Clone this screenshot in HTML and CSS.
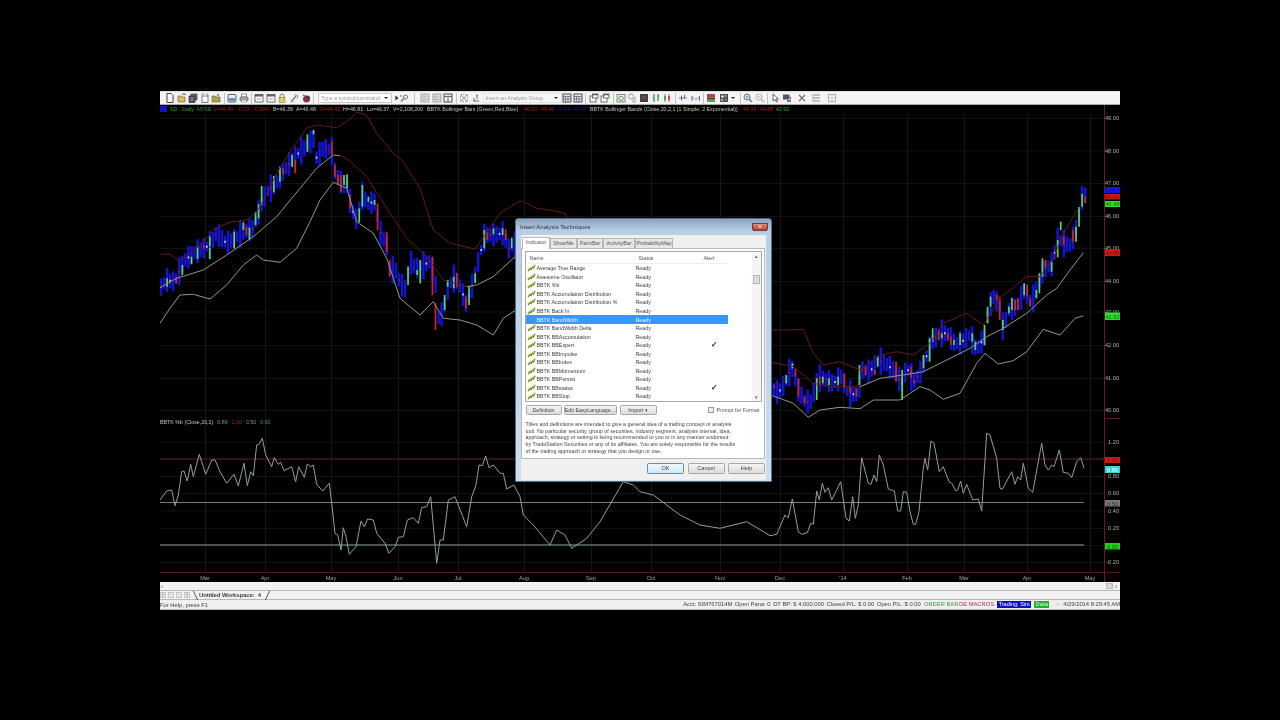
FILE: index.html
```html
<!DOCTYPE html>
<html lang="en">
<head>
<meta charset="utf-8">
<title>TradeStation - Insert Analysis Techniques</title>
<link rel="stylesheet" href="styles.css">
</head>
<body>
<svg class="defs" aria-hidden="true">
  <symbol id="i-new" viewBox="0 0 10 10"><path d="M2 .5h4l2 2v7H2z" fill="#fff" stroke="#222"/></symbol>
  <symbol id="i-open" viewBox="0 0 10 10"><path d="M1 3h3l1 1h3v5H1z" fill="#d9b44a" stroke="#5a4a20" stroke-width=".7"/><path d="M5 2l2-1.500 2 1.500" fill="none" stroke="#222"/></symbol>
  <symbol id="i-stack" viewBox="0 0 10 10"><rect x="3" y="1" width="6" height="6" fill="#555" stroke="#222" stroke-width=".7"/><rect x="1" y="3" width="6" height="6.500" fill="#333" stroke="#111" stroke-width=".7"/><path d="M2.500 5h3M2.500 7h3" stroke="#ddd" stroke-width=".6"/></symbol>
  <symbol id="i-doc" viewBox="0 0 10 10"><path d="M2 3h6v6.500H2z" fill="#fff" stroke="#444" stroke-width=".8"/><path d="M1 2l3-1.500M6 .5l3 2" stroke="#444" stroke-width=".8"/></symbol>
  <symbol id="i-folder" viewBox="0 0 10 10"><path d="M1 3h3l1 1h4v5H1z" fill="#a88f35" stroke="#4c5a20" stroke-width=".7"/><path d="M6 3l2-2" stroke="#2f8f3f" stroke-width="1.200"/></symbol>
  <symbol id="i-save" viewBox="0 0 10 10"><rect x="1" y="1.500" width="8" height="7.500" rx="1" fill="#e8eef6" stroke="#33475f"/><rect x="2" y="5" width="6" height="3" fill="#5c7da6"/></symbol>
  <symbol id="i-print" viewBox="0 0 10 10"><rect x="2.500" y="1" width="5" height="3" fill="#fff" stroke="#555" stroke-width=".7"/><rect x="1" y="4" width="8" height="4" rx="1" fill="#9a9a9a" stroke="#444" stroke-width=".7"/><rect x="2.500" y="7" width="5" height="2" fill="#fff" stroke="#555" stroke-width=".5"/></symbol>
  <symbol id="i-win" viewBox="0 0 10 10"><rect x="1" y="1.500" width="8" height="7.500" fill="#fff" stroke="#333" stroke-width=".8"/><rect x="1" y="1.500" width="8" height="2" fill="#444"/><path d="M2.500 6h5" stroke="#777" stroke-width=".7"/></symbol>
  <symbol id="i-lock" viewBox="0 0 10 10"><path d="M3 5V3a2 2 0 0 1 4 0v2" fill="none" stroke="#7a6a20"/><rect x="2" y="4.500" width="6" height="5" fill="#e3c24a" stroke="#7a6a20" stroke-width=".6"/></symbol>
  <symbol id="i-tools" viewBox="0 0 10 10"><path d="M2 9l5-6" stroke="#666" stroke-width="1.300"/><path d="M5 1.500l4 1-1 3" fill="none" stroke="#888"/><path d="M2 6l3 3" stroke="#b8a24a"/></symbol>
  <symbol id="i-pie" viewBox="0 0 10 10"><circle cx="5.500" cy="6" r="3.500" fill="#7a1020"/><path d="M5.500 6V2.500A3.500 3.500 0 0 1 9 6z" fill="#222"/><path d="M2 1.500l2 2" stroke="#2e8a3a" stroke-width="1.200"/></symbol>
  <symbol id="i-arrow" viewBox="0 0 10 10"><path d="M3 2l4 3-4 3z" fill="#111"/></symbol>
  <symbol id="i-search" viewBox="0 0 10 10"><circle cx="6.500" cy="4" r="2" fill="none" stroke="#556"/><path d="M5 5.500L2 8.500" stroke="#556" stroke-width="1.200"/><path d="M1 3h2M2 2v2" stroke="#889"/></symbol>
  <symbol id="i-grid" viewBox="0 0 10 10"><rect x="1" y="1" width="8" height="8" fill="#ddd" stroke="#888" stroke-width=".8"/><path d="M1 4h8M1 6.500h8M4 1v8" stroke="#999" stroke-width=".6"/></symbol>
  <symbol id="i-griddark" viewBox="0 0 10 10"><rect x="1" y="1" width="8" height="8" fill="#eee" stroke="#333"/><path d="M1 3.500h8M5 3.500V9" stroke="#333" stroke-width=".8"/></symbol>
  <symbol id="i-gear" viewBox="0 0 10 10"><rect x="1.500" y="1.500" width="7" height="7" fill="none" stroke="#889" stroke-dasharray="1.500 1"/><path d="M2 8l6-6M2 2l6 6" stroke="#667" stroke-width=".8"/></symbol>
  <symbol id="i-up" viewBox="0 0 10 10"><path d="M2 8h6M3 8V5M6 6V2" stroke="#555"/><path d="M5 2.500l1-1.500 1 1.500" fill="#555"/></symbol>
  <symbol id="i-gridb" viewBox="0 0 10 10"><rect x="1" y="1" width="8" height="8" fill="#dfe6ee" stroke="#334"/><path d="M1 3.500h8M3.500 3.500V9M6 3.500V9M1 6h8" stroke="#445" stroke-width=".7"/></symbol>
  <symbol id="i-winb" viewBox="0 0 10 10"><rect x="1" y="3" width="6" height="6" fill="#fff" stroke="#333" stroke-width=".8"/><rect x="3.500" y="1" width="5.500" height="4" fill="#fff" stroke="#333" stroke-width=".8"/><rect x="3.500" y="1" width="5.500" height="1.300" fill="#444"/></symbol>
  <symbol id="i-clock" viewBox="0 0 10 10"><rect x="1" y="1.500" width="8" height="7.500" fill="#e6efe0" stroke="#3f6a3f" stroke-width=".8"/><circle cx="5" cy="5.500" r="2.200" fill="none" stroke="#3f6a3f" stroke-width=".8"/></symbol>
  <symbol id="i-head" viewBox="0 0 10 10"><circle cx="4" cy="3.500" r="2.500" fill="none" stroke="#888"/><path d="M6 6.500v3M8 4v5.500" stroke="#888"/></symbol>
  <symbol id="i-dark" viewBox="0 0 10 10"><rect x="1" y="1" width="8" height="8" fill="#222"/><path d="M3 7l2-4 2 3" fill="none" stroke="#b33" stroke-width=".8"/></symbol>
  <symbol id="i-gbars" viewBox="0 0 10 10"><path d="M3 1v8M7 1v7" stroke="#1f8f2f" stroke-width="1.400"/><path d="M1.500 5h1.500M7 3h1.500" stroke="#1f8f2f"/></symbol>
  <symbol id="i-cand" viewBox="0 0 10 10"><path d="M3 1v8" stroke="#2d8f3d"/><rect x="2" y="3" width="2" height="4" fill="#2d8f3d"/><path d="M7 1v8" stroke="#c43030"/><rect x="6" y="3" width="2" height="4" fill="#c43030"/></symbol>
  <symbol id="i-spread" viewBox="0 0 10 10"><path d="M1 5h8M3.500 2.500v5M6.500 1.500v4" stroke="#44608c"/></symbol>
  <symbol id="i-spreadb" viewBox="0 0 10 10"><path d="M1 8V3M1 5h2M8.500 8V3M6.500 5h2M4 6h2" stroke="#44608c"/></symbol>
  <symbol id="i-flag" viewBox="0 0 10 10"><rect x="1" y="1" width="8" height="3.500" fill="#b82020"/><rect x="1" y="4.500" width="8" height="1.500" fill="#222"/><rect x="1" y="6" width="8" height="3" fill="#2d9a3d"/></symbol>
  <symbol id="i-mosaic" viewBox="0 0 10 10"><rect x="1" y="1" width="8" height="8" fill="#333"/><circle cx="3.500" cy="3.500" r="1.200" fill="#fff"/><circle cx="6.500" cy="6.500" r="1.200" fill="#d33"/><circle cx="6.500" cy="3" r="1" fill="#4c4"/><circle cx="3" cy="7" r="1" fill="#ccc"/></symbol>
  <symbol id="i-zoomin" viewBox="0 0 10 10"><circle cx="4" cy="4" r="3" fill="#eef" stroke="#556"/><path d="M6 6l3 3" stroke="#556" stroke-width="1.300"/><path d="M2.500 4h3M4 2.500v3" stroke="#38a"/></symbol>
  <symbol id="i-zoomout" viewBox="0 0 10 10"><circle cx="4" cy="4" r="3" fill="#f4f4f4" stroke="#aaa"/><path d="M6 6l3 3" stroke="#aaa" stroke-width="1.300"/><path d="M2.500 4h3" stroke="#aaa"/></symbol>
  <symbol id="i-cursor" viewBox="0 0 10 10"><path d="M3 1v7l2-1.500L6.500 9 7.500 8.500 6 6h2.500z" fill="#fff" stroke="#222" stroke-width=".8"/></symbol>
  <symbol id="i-wdark" viewBox="0 0 10 10"><rect x="1" y="1.500" width="6.500" height="5" fill="#2b3f66"/><path d="M5 7h4v2H5z" fill="#666"/><path d="M7 4h2v3" fill="#a33"/></symbol>
  <symbol id="i-wrench" viewBox="0 0 10 10"><path d="M2 2l6 6M8 2L2 8" stroke="#555" stroke-width="1.200"/></symbol>
  <symbol id="i-list" viewBox="0 0 10 10"><path d="M2 2h6M2 5h6M2 8h6" stroke="#777"/><path d="M1 1v8" stroke="#b09a4a"/></symbol>
  <symbol id="i-faint" viewBox="0 0 10 10"><rect x="1.500" y="1.500" width="7" height="7" fill="none" stroke="#aaa"/><path d="M1.500 5h7M5 1.500v7" stroke="#bbb" stroke-width=".7"/></symbol>
  <symbol id="i-ind" viewBox="0 0 10 10"><path d="M.5 9L3 6l1.500 1L6 4l1.500 1.200L9.500 1" fill="none" stroke="#6e8a14" stroke-width="1.500"/><path d="M.5 7L3 4.500 5 5 8 1.500" fill="none" stroke="#c2a020" stroke-width=".8"/></symbol>
</svg>

<div class="app">
  <div class="toolbar">
    <div class="grp"><svg class="i"><use href="#i-new"/></svg><svg class="i"><use href="#i-open"/></svg><svg class="i"><use href="#i-stack"/></svg><svg class="i"><use href="#i-doc"/></svg><svg class="i"><use href="#i-folder"/></svg></div>
    <span class="sep"></span>
    <div class="grp"><svg class="i"><use href="#i-save"/></svg><svg class="i"><use href="#i-print"/></svg></div>
    <span class="sep"></span>
    <div class="grp"><svg class="i"><use href="#i-win"/></svg><svg class="i"><use href="#i-win"/></svg><svg class="i"><use href="#i-lock"/></svg><svg class="i"><use href="#i-tools"/></svg><svg class="i"><use href="#i-pie"/></svg></div>
    <span class="sep"></span>
    <div class="combo combo-symbol"><span>Type a symbol/command</span><b class="caret"></b></div>
    <svg class="i i-narrow"><use href="#i-arrow"/></svg>
    <svg class="i i-search"><use href="#i-search"/></svg>
    <span class="sep sep-wide"></span>
    <div class="grp"><svg class="i"><use href="#i-grid"/></svg><svg class="i"><use href="#i-grid"/></svg><svg class="i"><use href="#i-griddark"/></svg></div>
    <span class="sep"></span>
    <div class="grp"><svg class="i"><use href="#i-gear"/></svg><svg class="i"><use href="#i-up"/></svg></div>
    <div class="combo combo-group"><span>Insert an Analysis Group</span><b class="caret"></b></div>
    <div class="grp"><svg class="i"><use href="#i-gridb"/></svg><svg class="i"><use href="#i-gridb"/></svg></div>
    <span class="sep"></span>
    <div class="grp"><svg class="i"><use href="#i-winb"/></svg><svg class="i"><use href="#i-winb"/></svg></div>
    <span class="sep"></span>
    <div class="grp"><svg class="i"><use href="#i-clock"/></svg><svg class="i"><use href="#i-head"/></svg><svg class="i"><use href="#i-dark"/></svg><svg class="i"><use href="#i-gbars"/></svg><svg class="i"><use href="#i-cand"/></svg></div>
    <span class="sep"></span>
    <div class="grp grp-wide"><svg class="i"><use href="#i-spread"/></svg><svg class="i"><use href="#i-spreadb"/></svg></div>
    <span class="sep"></span>
    <div class="grp grp-wide"><svg class="i"><use href="#i-flag"/></svg><svg class="i"><use href="#i-mosaic"/></svg></div><b class="caret caret-tb"></b>
    <span class="sep"></span>
    <div class="grp"><svg class="i"><use href="#i-zoomin"/></svg><svg class="i"><use href="#i-zoomout"/></svg></div>
    <span class="sep"></span>
    <div class="grp"><svg class="i"><use href="#i-cursor"/></svg><svg class="i"><use href="#i-wdark"/></svg></div>
    <svg class="i i-gap"><use href="#i-wrench"/></svg>
    <svg class="i i-gap"><use href="#i-list"/></svg>
    <svg class="i i-gap"><use href="#i-faint"/></svg>
  </div>

  <div class="chart">
    <svg id="plot" class="plot" viewBox="160 105 960 477" preserveAspectRatio="none"></svg>
    <div class="legend">
      <i class="swatch"></i>
      <span class="g sym">SD - Daily</span><span class="g nyse">NYSE</span>
      <span class="r l1">L=46.46</span><span class="r l2">-0.23</span><span class="r l3">-0.50%</span>
      <span class="w b1">B=46.39</span><span class="w a1">A=46.48</span><span class="r o1">O=46.62</span>
      <span class="w h1">H=46.81</span><span class="w lo">Lo=46.37</span><span class="w v1">V=2,108,200</span>
      <span class="w t1">BBTK Bollinger Bars (Green,Red,Blue)</span>
      <span class="r n1">46.62</span><span class="r n2">46.46</span><span class="bl n3">46.81</span><span class="bl n4">46.37</span>
      <span class="w t2">BBTK Bollinger Bands (Close,20,2,1 (1 Simple, 2 Exponential))</span>
      <span class="r n5">46.03</span><span class="r n6">44.88</span><span class="g n7">42.92</span>
    </div>
    <div class="legend2">
      <span class="w">BBTK %b (Close,20,2)</span><span class="c">0.89</span><span class="r">1.00</span><span class="gy">0.50</span><span class="g">0.00</span>
    </div>
  </div>

  <div class="hscroll">
    <span class="hs-left">‹</span>
    <span class="hs-thumb"></span>
    <span class="hs-right">›</span>
  </div>

  <div class="tabs">
    <span class="nav">|‹</span><span class="nav">‹</span><span class="nav">›</span><span class="nav">›|</span>
    <div class="wtab">Untitled Workspace:&nbsp; 4</div>
  </div>

  <div class="status">
    <span class="help">For Help, press F1</span>
    <span class="st">Acct: SIM767014M</span>
    <span class="st">Open Pana: 0</span>
    <span class="st">DT BP: $ 4,000,000</span>
    <span class="st">Closed P/L: $ 0.00</span>
    <span class="st">Open P/L: $ 0.00</span>
    <span class="st st-green">ORDER BAR</span>
    <span class="st st-red">OE MACROS</span>
    <span class="st st-trading">Trading: Sim</span>
    <span class="st st-data">Data</span>
    <span class="st st-bell">♪</span>
    <span class="st st-date">4/29/2014 8:29:45 AM</span>
  </div>
</div>

<div class="dialog">
  <div class="titlebar">
    <span>Insert Analysis Techniques</span>
    <span class="close">×</span>
  </div>
  <div class="client">
    <div class="dtabs">
      <span class="dtab active">Indicator</span>
      <span class="dtab t2">ShowMe</span>
      <span class="dtab t3">PaintBar</span>
      <span class="dtab t4">ActivityBar</span>
      <span class="dtab t5">ProbabilityMap</span>
    </div>
    <div class="panel">
      <div class="listbox">
        <div class="listmain">
          <div class="lhead"><span class="c-name">Name</span><span class="c-status">Status</span><span class="c-alert">Alert</span></div>
          <div class="lrows" id="rows"></div>
        </div>
        <div class="vscroll"><span class="up">▴</span><span class="thumb"></span><span class="dn">▾</span></div>
      </div>
      <div class="actions">
        <span class="btn b-def">Definition</span>
        <span class="btn b-edit">Edit EasyLanguage...</span>
        <span class="btn b-imp">Import ▾</span>
        <span class="check"><i></i>Prompt for Format</span>
      </div>
      <p class="disclaimer">Titles and definitions are intended to give a general idea of a trading concept or analysis<br>tool. No particular security, group of securities, industry segment, analysis interval, idea,<br>approach, strategy or setting is being recommended to you or in any manner endorsed<br>by TradeStation Securities or any of its affiliates. You are solely responsible for the results<br>of the trading approach or strategy that you design or use.</p>
    </div>
    <div class="footer">
      <span class="btn fbtn default">OK</span>
      <span class="btn fbtn">Cancel</span>
      <span class="btn fbtn">Help</span>
    </div>
  </div>
</div>
<script src="chart.js"></script>
</body>
</html>
```
FILE: styles.css
```css
* { box-sizing: border-box; }
html, body { margin: 0; height: 100%; background: #000; overflow: hidden; }
body { font-family: "Liberation Sans", Arial, sans-serif; position: relative; }
.defs { position: absolute; width: 0; height: 0; }

.app { position: absolute; left: 160px; top: 91px; width: 960px; height: 519px; display: flex; flex-direction: column; background: #f0f0f0; filter: blur(.4px); }

/* toolbar */
.toolbar { height: 14px; flex: none; display: flex; align-items: center; padding-left: 5px; background: #f4f4f4; border-top: 1px solid #ddd; border-bottom: 1px solid #aaa; }
.grp { display: flex; gap: 1.6px; }
.grp-wide { gap: 3px; }
.i { width: 10px; height: 10px; flex: none; opacity: .85; }
.i-narrow { width: 8px; margin-left: 1px; }
.i-search { margin-left: -2px; }
.i-gap { margin-left: 5px; }
.sep { width: 1px; height: 11px; background: #c4c4c4; margin: 0 2.3px; flex: none; }
.sep-wide { margin: 0 5px; }
.combo { height: 10px; background: #fff; border: 1px solid #c8c8c8; font-size: 5.3px; line-height: 8px; color: #9a9a9a; padding-left: 2px; display: flex; justify-content: space-between; align-items: center; flex: none; }
.combo-symbol { width: 74px; margin-left: 2px; }
.combo-group { width: 79px; margin-left: 2px; border-color: #e4e4e4; background: #f7f7f7; }
.caret { width: 0; height: 0; border: 2px solid transparent; border-top: 2.5px solid #222; border-bottom: 0; margin-right: 3px; flex: none; }
.caret-tb { margin-left: 2px; margin-right: 2px; }

/* chart */
.chart { position: relative; height: 477px; flex: none; background: #000; overflow: hidden; }
.plot { display: block; width: 960px; height: 477px; }
.plot text { font-family: "Liberation Sans", Arial, sans-serif; font-size: 5.6px; }
.legend, .legend2 { position: absolute; left: 0; font-size: 5.3px; line-height: 7px; white-space: nowrap; }
.legend { top: 0; height: 8px; width: 960px; }
.legend span { position: absolute; top: .5px; }
.legend .swatch { position: absolute; left: 0; top: 1px; width: 7px; height: 6px; background: #1212d0; }
.g { color: #3c9a48; } .r { color: #a02020; } .w { color: #c4c4c4; } .bl { color: #1a1a8e; } .c { color: #4fa5a0; } .gy { color: #8a8a8a; }
.sym { left: 10px; } .nyse { left: 37px; } .l1 { left: 54px; } .l2 { left: 77px; } .l3 { left: 93px; }
.b1 { left: 113px; } .a1 { left: 136px; } .o1 { left: 160px; } .h1 { left: 183px; } .lo { left: 207px; } .v1 { left: 233px; } .t1 { left: 267px; }
.n1 { left: 364px; } .n2 { left: 381px; } .n3 { left: 397px; } .n4 { left: 413px; } .t2 { left: 430px; }
.n5 { left: 583px; } .n6 { left: 600px; } .n7 { left: 616px; }
.legend2 { top: 313.5px; display: flex; gap: 4px; }

/* bottom bars */
.hscroll { height: 9px; flex: none; background: #f2f2f2; border-bottom: 1px solid #b8b8b8; display: flex; align-items: center; font-size: 6px; color: #444; padding: 0 3px 0 1px; }
.hs-thumb { margin-left: auto; width: 7px; height: 6px; background: #d8d8d8; border: 1px solid #bbb; }
.hs-right { margin-left: 2px; }
.tabs { height: 9px; flex: none; background: #f2f2f2; border-bottom: 1px solid #b8b8b8; display: flex; align-items: center; font-size: 5px; color: #555; }
.nav { width: 6px; height: 6px; margin-right: 2px; background: #eee; border: 1px solid #c4c4c4; line-height: 4px; text-align: center; font-size: 4px; flex: none; }
.wtab { position: relative; margin-left: 2px; height: 9px; padding: 0 0 0 5px; width: 75px; font-size: 6px; line-height: 8px; font-weight: 700; color: #444; white-space: nowrap; letter-spacing: -.02em; }
.wtab::before, .wtab::after { content: ""; position: absolute; top: 0; bottom: 0; width: 1px; background: #555; }
.wtab::before { left: 1px; transform: skewX(25deg); }
.wtab::after { right: 1px; transform: skewX(-25deg); }
.status { flex: 1; min-height: 0; background: #efefef; border-bottom: 1px solid #bdbdbd; display: flex; align-items: center; font-size: 5.8px; color: #444; white-space: nowrap; }
.help { font-size: 5.8px; margin-right: auto; }
.st { margin-left: 2.6px; line-height: 7px; flex: none; }
.st-green { color: #3f9a4a; margin-left: 3.2px; } .st-red { color: #c03040; margin-left: .3px; }
.st-trading { background: #1010c0; color: #fff; padding: 0 1.5px; margin-left: 3px; font-size: 5.5px; }
.st-data { background: #22b02a; color: #eef; padding: 0 1.5px; margin-left: 3px; }
.st-bell { color: #d8b030; margin-left: 7px; }
.st-date { margin-left: 4px; }

/* dialog */
.dialog { position: absolute; left: 515px; top: 218px; width: 257px; height: 264px; background: linear-gradient(#8aa3bf 0, #b7cfe6 12px, #c9dff2 100%); border: 1px solid #59708a; border-radius: 3px 3px 0 0; display: flex; flex-direction: column; filter: blur(.4px); color: #3b3b3b; font-size: 5.3px; }
.titlebar { height: 16px; flex: none; display: flex; align-items: center; justify-content: space-between; padding: 0 3px 0 4px; font-size: 6px; color: #2d3440; }
.close { width: 16px; height: 8px; background: linear-gradient(#d98878, #b8402e); border: 1px solid #6e3a38; color: #fff; text-align: center; font-size: 7px; line-height: 6px; border-radius: 0 0 2px 2px; }
.client { margin: 0 5px 1px; flex: 1; min-height: 0; background: #f0f0f0; padding: 2px 0 0; display: flex; flex-direction: column; }
.dtabs { display: flex; height: 11px; padding-left: 1px; flex: none; position: relative; }
.dtab { height: 10px; margin-top: 1px; background: #e6e6e6; border: 1px solid #b8b8b8; border-bottom: 0; text-align: center; line-height: 8px; font-size: 5.3px; color: #555; flex: none; }
.dtab.active { width: 28px; height: 12px; margin-top: 0; background: #fff; line-height: 9px; position: relative; z-index: 1; }
.t2 { width: 27px; } .t3 { width: 26px; } .t4 { width: 32px; } .t5 { width: 38px; }
.panel { height: 211px; flex: none; background: #fff; border: 1px solid #b8b8b8; margin-right: 1px; padding: 2px 2.5px 0; display: flex; flex-direction: column; }
.listbox { height: 151px; flex: none; border: 1px solid #a9a9a9; display: flex; overflow: hidden; background: #fff; }
.listmain { flex: 1; min-width: 0; }
.lhead { height: 12px; display: flex; align-items: center; position: relative; color: #555; border-bottom: 1px solid #eee; }
.c-name { position: absolute; left: 4px; } .c-status { position: absolute; left: 113px; } .c-alert { position: absolute; left: 178px; }
.lrows { display: flex; flex-direction: column; }
.row { height: 8.55px; flex: none; display: flex; align-items: center; position: relative; width: 202px; line-height: 8px; }
.row .ic { width: 9px; height: 8px; margin-left: 1.5px; margin-right: .5px; flex: none; }
.row .nm { width: 99px; white-space: nowrap; }
.row .sts { width: 60px; }
.row .ck { position: absolute; left: 185px; color: #111; font-size: 7.5px; font-weight: 700; }
.row.sel { background: #3399ff; color: #eaf4ff; }
.row.sel .ic { opacity: .35; }
.vscroll { width: 9px; flex: none; background: #f4f4f4; margin-left: 25px; position: relative; font-size: 5px; color: #555; text-align: center; }
.vscroll span { position: absolute; left: 0; width: 100%; }
.vscroll .up { top: 1px; } .vscroll .dn { bottom: 1px; }
.vscroll .thumb { top: 23px; height: 9px; background: #dcdcdc; border: 1px solid #b5b5b5; left: 1px; width: 7px; }
.actions { height: 11px; margin-top: 2.5px; flex: none; display: flex; align-items: center; position: relative; }
.btn { height: 10.5px; background: linear-gradient(#f4f4f4, #dcdcdc); border: 1px solid #a8a8a8; border-radius: 1.5px; text-align: center; line-height: 8px; color: #444; font-size: 5.3px; flex: none; }
.b-def { width: 36px; margin-left: 1px; } .b-edit { width: 53px; margin-left: 2px; } .b-imp { width: 37px; margin-left: 3px; }
.check { position: absolute; left: 183px; display: flex; align-items: center; color: #555; gap: 3px; white-space: nowrap; }
.check i { width: 6px; height: 6px; border: 1px solid #999; background: #eee; }
.disclaimer { margin: 5.5px 0 0 1px; font-size: 5.3px; line-height: 6.7px; color: #444; white-space: nowrap; }
.footer { flex: 1; display: flex; justify-content: flex-end; align-items: flex-start; gap: 3.5px; padding: 4px 1px 0 0; }
.fbtn { width: 37px; height: 11px; font-size: 5.6px; }
.fbtn.default { border-color: #4d92c9; background: linear-gradient(#f2f8fc, #cfe6f6); }
```
FILE: chart.js
```js
(function () {
  var NS = 'http://www.w3.org/2000/svg';
  var svg = document.getElementById('plot');
  function el(name, attrs, text) {
    var e = document.createElementNS(NS, name);
    for (var k in attrs) e.setAttribute(k, attrs[k]);
    if (text) e.textContent = text;
    svg.appendChild(e);
    return e;
  }
  function line(x1, y1, x2, y2, c, w) { el('line', { x1: x1, y1: y1, x2: x2, y2: y2, stroke: c, 'stroke-width': w || 1 }); }
  function poly(p, ox, oy, c, w) {
    var s = p.map(function (q) { return (ox + q[0] / 3).toFixed(1) + ',' + (oy + q[1] / 3).toFixed(1); }).join(' ');
    el('polyline', { points: s, fill: 'none', stroke: c, 'stroke-width': w || 1, 'stroke-linejoin': 'round' });
  }

  /* grid */
  var months = [['Mar', 205], ['Apr', 265], ['May', 331], ['Jun', 398], ['Jul', 458], ['Aug', 524], ['Sep', 591], ['Oct', 651], ['Nov', 720], ['Dec', 780], ["'14", 843], ['Feb', 907], ['Mar', 964], ['Apr', 1027], ['May', 1090]];
  var prices = [['49.00', 118], ['48.00', 150.5], ['47.00', 183], ['46.00', 216], ['45.00', 248], ['44.00', 281], ['43.00', 311.5], ['42.00', 345], ['41.00', 378], ['40.00', 410]];
  var pcts = [['1.20', 441.5], ['1.00', 459], ['0.80', 476], ['0.60', 493], ['0.40', 510.5], ['0.20', 528], ['0.00', 545], ['-0.20', 562]];
  months.forEach(function (m) { line(m[1] + .5, 114, m[1] + .5, 572, '#181818'); });
  prices.concat(pcts).forEach(function (p) { line(160, p[1] + .5, 1104, p[1] + .5, '#111'); });

  /* upper panel bars */
  var L = { ox: 160, oy: 105, from: 3, to: 1065,
    trace: [[0,550],[20,525],[45,530],[70,470],[100,445],[130,430],[150,420],[170,385],[200,415],[225,400],[250,380],[280,370],[300,310],[320,260],[345,240],[370,200],[400,160],[420,140],[440,125],[460,100],[470,160],[490,130],[515,135],[525,200],[545,235],[560,240],[575,310],[590,345],[605,270],[625,295],[650,290],[655,370],[680,420],[690,500],[705,490],[720,535],[735,550],[750,470],[770,490],[790,480],[810,470],[825,520],[835,640],[850,620],[865,545],[880,520],[895,530],[920,600],[940,530],[960,450],[975,390],[1000,390],[1030,385],[1045,430],[1062,420]],
    green: [[17,520,545],[63,480,510],[90,455,478],[117,425,462],[145,428,462],[153,395,425],[225,380,430],[252,352,375],[272,368,403],[290,320,360],[298,298,340],[307,243,300],[343,213,262],[361,187,230],[397,150,185],[442,88,140],[460,75,88],[550,210,240],[558,208,250],[596,310,352],[605,240,305],[623,275,290],[640,285,300],[740,485,540],[775,495,510],[785,465,535],[858,570,615],[867,525,545],[885,515,550],[930,542,600],[948,505,535],[975,375,430],[1003,370,388],[1030,370,390],[1057,398,430]],
    red: [[45,515,535],[127,420,432],[262,365,390],[370,190,207],[407,165,205],[515,110,150],[523,180,215],[533,210,240],[543,210,260],[571,270,310],[651,295,375],[677,380,440],[687,465,515],[820,455,570],[830,595,675],[893,505,545],[920,575,610],[985,380,405],[1038,372,405]]
  };
  var R = { ox: 770, oy: 170, from: 3, to: 946,
    trace: [[10,655],[25,670],[45,640],[65,590],[85,660],[105,695],[125,695],[140,625],[160,625],[190,640],[215,620],[235,670],[265,675],[275,600],[300,605],[325,570],[345,580],[370,600],[385,620],[395,650],[410,590],[430,635],[450,610],[465,570],[490,510],[510,490],[530,490],[555,520],[570,520],[600,495],[620,540],[645,500],[655,420],[670,380],[690,410],[700,480],[715,420],[740,410],[765,360],[785,400],[805,340],[820,300],[850,280],[860,200],[880,220],[900,225],[915,190],[925,140],[935,85],[942,75]],
    green: [[47,615,640],[67,580,595],[137,625,690],[157,620,640],[175,625,645],[200,620,645],[272,585,645],[327,560,590],[392,625,690],[400,600,645],[465,555,595],[482,505,575],[490,475,515],[517,490,505],[555,510,525],[572,490,525],[605,490,515],[617,515,540],[645,465,525],[653,410,460],[662,380,410],[697,450,480],[716,410,430],[725,385,420],[762,340,375],[798,360,385],[807,310,370],[815,265,320],[843,275,305],[860,210,262],[870,155,180],[915,170,215],[924,112,170],[933,72,110]],
    red: [[12,645,655],[75,595,620],[85,625,680],[102,680,700],[147,620,645],[220,610,655],[245,650,670],[255,655,680],[290,590,615],[310,600,615],[380,575,635],[420,590,625],[435,630,640],[508,480,510],[535,490,510],[545,500,525],[680,375,390],[690,380,450],[735,390,420],[745,385,420],[770,345,380],[785,385,410],[825,270,295],[878,200,225],[905,180,215],[943,80,100]]
  };
  function at(t, x) {
    for (var i = 1; i < t.length; i++) if (x <= t[i][0]) {
      var a = t[i - 1], b = t[i];
      return a[1] + (b[1] - a[1]) * (x - a[0]) / (b[0] - a[0]);
    }
    return t[t.length - 1][1];
  }
  function drawBars(S) {
    var half = [26, 18, 36, 22, 30, 16, 42, 24, 20, 34];
    var step = 9.15, n = 0;
    for (var x = S.from; x <= S.to; x += step, n++) {
      var y = at(S.trace, x), h = half[n % half.length];
      var px = S.ox + x / 3;
      line(px, S.oy + (y - h) / 3, px, S.oy + (y + h) / 3, '#1414d0', 2.5);
      var hit = false;
      [['green', '#5cd65c'], ['red', '#d22424']].forEach(function (k) {
        S[k[0]].forEach(function (b) {
          if (Math.abs(b[0] - x) <= step / 2) {
            line(px, S.oy + b[1] / 3, px, S.oy + b[2] / 3, k[1], 1.7);
            hit = true;
          }
        });
      });
      if (!hit && n % 3 === 0) line(px, S.oy + (y - 3) / 3, px, S.oy + (y + 3) / 3, n % 2 ? '#d8e8d8' : '#8b2b2b', 1.5);
    }
  }
  drawBars(L);
  drawBars(R);

  /* Bollinger bands */
  var RED = '#661a1a', PALE = '#8f9a88';
  poly([[0,447],[30,448],[60,470],[100,440],[130,410],[165,370],[210,352],[260,345],[290,320],[320,270],[350,205],[390,140],[440,70],[470,60],[530,68],[560,50],[590,22],[620,30],[650,85],[700,145],[730,170],[780,250],[820,375],[870,415],[945,432],[975,390],[1020,325],[1075,290],[1085,288],[1130,310],[1170,315],[1215,325],[1300,500],[1500,700]], 160, 105, RED);
  poly([[-20,480],[10,480],[50,480],[100,478],[130,550],[160,585],[210,575],[270,600],[330,555],[380,545],[430,555],[480,520],[520,460],[590,430],[640,465],[690,385],[770,320],[810,320],[850,265],[880,190],[925,115]], 770, 170, RED);
  poly([[0,548],[50,520],[130,495],[200,450],[280,395],[350,335],[420,250],[470,190],[520,150],[540,152]], 160, 105, PALE);
  poly([[540,152],[560,160],[620,215],[680,310],[740,400],[800,455],[850,525],[920,545]], 160, 105, RED);
  poly([[920,545],[950,540],[1000,515],[1060,460],[1090,445]], 160, 105, PALE);
  poly([[-20,570],[10,578],[70,590],[130,640],[180,650],[270,650]], 770, 170, RED);
  poly([[270,650],[330,625],[400,615],[460,605],[530,570],[600,535],[650,500],[700,475],[770,430],[830,375],[860,355],[900,300],[940,248]], 770, 170, PALE);
  poly([[0,655],[30,610],[60,570],[100,568],[150,582],[200,540],[250,480],[290,450],[310,465],[360,472],[410,430],[450,350],[480,285],[520,232],[560,250],[590,350],[640,385],[680,460],[720,580],[780,630],[820,590],[850,640],[900,645],[950,660],[1000,690],[1030,640],[1075,610],[1090,600]], 160, 105, PALE);
  poly([[-20,670],[10,678],[70,700],[115,742],[150,720],[210,712],[270,716],[310,690],[390,690],[450,650],[480,660],[520,688],[570,670],[620,580],[645,550],[685,582],[730,572],[770,545],[820,478],[870,495],[915,445],[940,437]], 770, 170, PALE);

  /* lower panel */
  line(160, 459, 1105, 459, '#5c1a1a', 1);
  line(160, 502.5, 1084, 502.5, '#7c7e76', 1);
  line(160, 545, 1084, 545, '#5f7063', 1.3);
  var PCT = '#8fa19b';
  poly([[0,255],[20,228],[35,225],[45,272],[55,240],[65,170],[72,168],[82,198],[92,148],[100,185],[118,118],[137,178],[155,135],[165,135],[180,170],[200,205],[222,178],[235,212],[252,145],[262,212],[272,170],[280,182],[290,90],[297,88],[307,70],[317,120],[335,155],[343,128],[355,148],[362,142],[372,167],[395,155],[407,200],[416,155],[433,187],[442,147],[452,155],[460,150],[470,208],[488,228],[508,205],[515,265],[525,355],[533,360],[543,405],[550,338],[558,365],[568,418],[588,395],[603,318],[613,335],[623,312],[640,315],[650,355],[675,385],[687,415],[705,395],[715,367],[730,365],[742,315],[760,308],[775,325],[785,278],[800,275],[812,245],[830,445],[840,375],[850,375],[865,255],[885,245],[920,335],[935,245],[948,210],[957,150],[967,152],[977,123],[987,158],[1000,150],[1020,175],[1030,175],[1040,222],[1062,210],[1080,245],[1090,300],[1120,330],[1170,390],[1190,345],[1215,360],[1235,400],[1280,370],[1320,320],[1390,200],[1420,210],[1440,230],[1480,240],[1560,300],[1620,330],[1680,340],[1760,320],[1830,362]], 160, 415, PCT);
  poly([[0,362],[20,358],[45,300],[55,308],[67,252],[85,350],[95,358],[112,353],[122,325],[130,328],[140,228],[148,255],[157,205],[165,232],[175,218],[185,255],[212,200],[228,310],[238,318],[248,245],[256,310],[265,270],[275,128],[295,205],[303,208],[312,180],[320,200],[328,120],[340,150],[355,222],[373,228],[383,288],[392,288],[400,230],[410,232],[420,290],[430,328],[437,328],[447,290],[460,160],[465,130],[473,165],[483,78],[492,85],[508,170],[520,155],[537,200],[545,205],[558,228],[563,225],[572,198],[580,235],[590,208],[608,255],[625,252],[635,288],[650,55],[660,60],[680,130],[690,220],[697,223],[725,170],[735,208],[743,185],[752,195],[760,145],[775,220],[788,232],[815,85],[825,150],[835,165],[845,150],[852,155],[868,105],[880,172],[895,175],[905,188],[920,140],[932,128],[942,160]], 770, 415, PCT);

  /* axes */
  line(1104.5, 105, 1104.5, 582, '#6a1a1a');
  line(160, 572.5, 1120, 572.5, '#561616');
  line(1105, 418.5, 1120, 418.5, '#6a1a1a');
  prices.concat(pcts).forEach(function (p) {
    if (p[0] === '1.00' || p[0] === '0.00') return;
    el('text', { x: 1119, y: p[1] + 2, fill: '#b0b0b0', 'text-anchor': 'end' }, p[0]);
  });
  months.forEach(function (m) { el('text', { x: m[1], y: 580, fill: '#a0a0a0', 'text-anchor': 'middle' }, m[0]); });

  [[187, 6, '#1414d8', '46.81', '#1414d8'], [194, 5.5, '#d01818', '46.46', '#7a1010'], [201, 6, '#2ee02e', '46.48', '#0b6a0b'], [249, 7, '#d01818', '44.88', '#7a1010'], [312.5, 7.5, '#2ee02e', '42.92', '#0b6a0b'], [457, 6, '#d01818', '1.00', '#7a1010'], [466, 7, '#35d5d5', '0.89', '#f0ffff'], [500, 6.5, '#777', '0.50', '#333'], [543, 6.5, '#22d022', '0.00', '#0b5a0b']].forEach(function (t) {
    el('rect', { x: 1105, y: t[0], width: 15, height: t[1], fill: t[2] });
    el('text', { x: 1112.5, y: t[0] + t[1] / 2 + 2.4, fill: t[4], 'text-anchor': 'middle' }, t[3]);
  });

  /* dialog list */
  var names = ['Average True Range', 'Awesome Oscillator', 'BBTK %b', 'BBTK Accumulation Distribution', 'BBTK Accumulation Distribution %', 'BBTK Back In', 'BBTK BandWidth', 'BBTK BandWidth Delta', 'BBTK BBAccumulation', 'BBTK BBExpert', 'BBTK BBImpulse', 'BBTK BBIndex', 'BBTK BBMomentum', 'BBTK BBPersist', 'BBTK BBstatus', 'BBTK BBStop', ''];
  var rows = document.getElementById('rows');
  names.forEach(function (n, i) {
    var r = document.createElement('div');
    r.className = 'row' + (i === 6 ? ' sel' : '');
    r.innerHTML = '<svg class="ic"><use href="#i-ind"/></svg>' +
      '<span class="nm">' + n + '</span><span class="sts">' + (n ? 'Ready' : '') + '</span>' +
      (i === 9 || i === 14 ? '<span class="ck">✓</span>' : '');
    rows.appendChild(r);
  });
})();
```
